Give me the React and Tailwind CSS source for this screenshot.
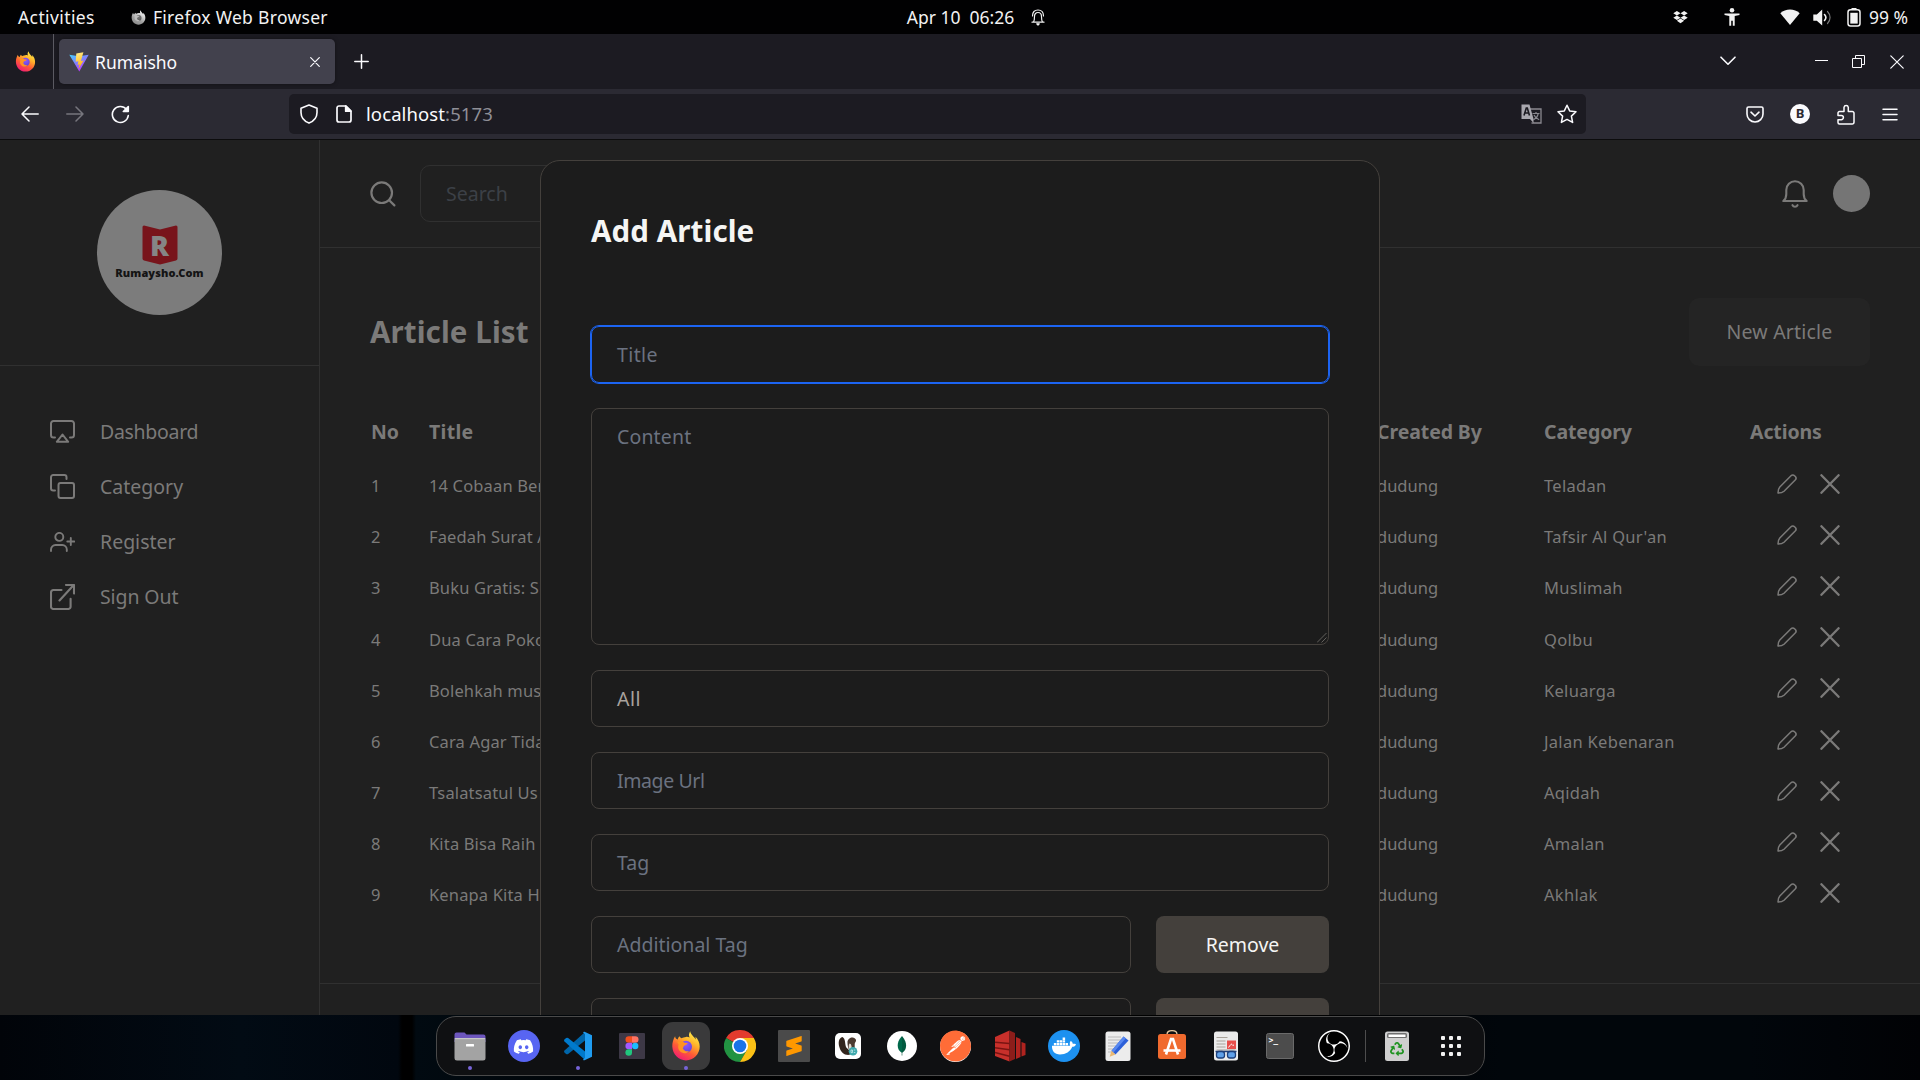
import React from "react";
import { FaDiscord, FaDocker, FaDropbox, FaRecycle } from "react-icons/fa";
import { SiSublimetext, SiObsstudio, SiPostman } from "react-icons/si";

const stroke = {
  fill: "none",
  stroke: "currentColor",
  strokeLinecap: "round",
  strokeLinejoin: "round",
};

/* ---------- shared artwork ---------- */

function FirefoxLogo({ size, mono = false, id }) {
  return (
    <svg width={size} height={size} viewBox="0 0 28 30">
      <defs>
        <linearGradient id={id + "f"} x1="0.8" y1="0" x2="0.25" y2="1">
          <stop offset="0" stopColor={mono ? "#ffffff" : "#fff44f"} />
          <stop offset="0.35" stopColor={mono ? "#d0d0d0" : "#ffb32a"} />
          <stop offset="0.65" stopColor={mono ? "#a0a0a0" : "#ff5a36"} />
          <stop offset="1" stopColor={mono ? "#8a8a8a" : "#f0157a"} />
        </linearGradient>
        <radialGradient id={id + "g"} cx="0.5" cy="0.3" r="0.8">
          <stop offset="0" stopColor={mono ? "#7a7a7a" : "#9059ff"} />
          <stop offset="1" stopColor={mono ? "#555555" : "#5b3fd0"} />
        </radialGradient>
      </defs>
      <path
        d="M18.2 0.3c-1.400 2.400-1.600 4.200-.6 6.200-1.400-.7-2.400-.7-3.600-.6-1.800.1-3 .6-4.300 1.400-.9-.2-1.700-.9-2.200-2-1 .8-1.500 2-1.700 3.200C4.200 8.200 3.300 7 3.100 5.300 1.200 8.200.2 12 .3 15.600.6 23.400 6.500 29.400 14 29.400c7.700 0 13.700-6.200 13.700-13.800 0-4-1.600-7.400-4.200-9.900.2 1.200.2 2.100.1 2.900C22.400 5.600 18.900 4.300 18.200.3Z"
        fill={`url(#${id}f)`}
      />
      <circle cx="14" cy="15.800" r="6" fill={`url(#${id}g)`} />
      <path
        d="M5.200 10.800c2.400-1.200 5.200-.9 7.200.9 1.100.2 2.400.2 3.200.4-.3 1.500-1.800 1.900-3.400 2.700-.8.500-.6 1.900-1.400 2.400 1.200 2.900 4 3.600 6.200 2.700-2 3-6.700 3.200-9.200.2-1.600-1.900-2.100-4.500-1.200-6.700Z"
        fill={mono ? "#bdbdbd" : "#ff9322"}
      />
    </svg>
  );
}

function ViteLogo() {
  return (
    <svg width="20" height="20" viewBox="0 0 20 20">
      <defs>
        <linearGradient id="viteA" x1="0" y1="0" x2="0.6" y2="1">
          <stop offset="0" stopColor="#41d1ff" />
          <stop offset="1" stopColor="#bd34fe" />
        </linearGradient>
        <linearGradient id="viteB" x1="0.4" y1="0" x2="0.6" y2="1">
          <stop offset="0" stopColor="#ffea83" />
          <stop offset="1" stopColor="#ffa800" />
        </linearGradient>
      </defs>
      <path d="M0.300 2.700 10 4.200l9.700-1.500L10.300 19.500Z" fill="url(#viteA)" />
      <path d="M14.400.2 7.300 1.600l-.6 8.200 2.700-.5-.8 3.600 2-.6-1.200 4.900 5.200-8.600-2.700.4Z" fill="url(#viteB)" />
    </svg>
  );
}

/* ---------- desktop top bar ---------- */

function TopBar() {
  return (
    <div className="grid h-[34px] shrink-0 grid-cols-3 items-center bg-[#010102] text-[17.5px] tracking-[0.3px] text-[#f2f2f2]">
      <div className="flex items-center pl-[18px]">
        <span className="tracking-[0.4px]">Activities</span>
        <span className="ml-[36px] mr-[7px] flex">
          <FirefoxLogo size={15} mono id="ffTop" />
        </span>
        <span>Firefox Web Browser</span>
      </div>
      <div className="flex items-center justify-center gap-[17px] pl-[32px]">
        <span className="whitespace-pre tracking-[0px]">Apr 10  06:26</span>
        <svg width="14" height="17" viewBox="0 0 14 17" {...stroke} strokeWidth="1.200">
          <path d="M1 13.200h12M2.500 13c1-1.500 1-3 1-5.500 0-2.500 1.500-4 3.500-4s3.500 1.500 3.500 4c0 2.500 0 4 1 5.500M1.500 7c0-4 2-6 5.500-6s5.500 2 5.500 6" />
          <path d="M5.700 14.800h2.600L7 16Z" fill="currentColor" />
        </svg>
      </div>
      <div className="flex items-center justify-end pr-[12px]">
        <FaDropbox className="mr-[36px] h-[14px] w-[15px]" />
        <svg className="mr-[40px]" width="16" height="18" viewBox="0 0 16 18" fill="currentColor">
          <circle cx="8" cy="2.300" r="2.300" />
          <path d="M.5 5.400h15v1.500L10.700 8v9.800H8.800v-5H7.200v5H5.300V8L.5 6.900Z" />
        </svg>
        <svg className="mr-[13px]" width="20" height="17" viewBox="0 0 20 17" fill="currentColor">
          <path d="M.3 4.200C5.500-.6 14.500-.6 19.700 4.200L10 16Z" />
        </svg>
        <svg className="mr-[15px]" width="19" height="17" viewBox="0 0 19 17">
          <path d="M.3 5.500h3.500L9.200.5v16L3.800 11.800H.3Z" fill="currentColor" />
          <path d="M11.500 5.500c1.600 1.800 1.600 4.300 0 6" {...stroke} strokeWidth="1.600" />
          <path d="M14.500 2.500c3.400 3.500 3.400 8.500 0 12" {...stroke} strokeWidth="1.200" opacity="0.5" />
        </svg>
        <svg className="mr-[8px]" width="14" height="19" viewBox="0 0 14 19">
          <path d="M4.500 0h5v2h-5Z" fill="currentColor" />
          <rect x="1" y="1.700" width="12" height="16.300" rx="2.500" {...stroke} strokeWidth="1.500" />
          <rect x="3.300" y="4.800" width="7.400" height="10.800" fill="currentColor" />
        </svg>
        <span className="tracking-normal">99 %</span>
      </div>
    </div>
  );
}

/* ---------- browser chrome ---------- */

function TabStrip() {
  return (
    <div className="flex h-[55px] shrink-0 items-center bg-[#1c1b22] text-[#fbfbfe]">
      <div className="flex h-full w-[54px] items-center justify-center border-r border-[#5b5a62] pr-[3px]">
        <FirefoxLogo size={21} id="ffPin" />
      </div>
      <div className="ml-[5px] flex h-[45px] w-[276px] items-center rounded-[5px] bg-[#42414d] pl-[10px] pr-[15px] shadow-[0_0_4px_rgba(0,0,0,0.4)]">
        <ViteLogo />
        <span className="ml-[6px] flex-1 pt-[1px] text-[17.5px]">Rumaisho</span>
        <svg width="10" height="10" viewBox="0 0 10 10" {...stroke} strokeWidth="1.200">
          <path d="M.7.7l8.600 8.600M9.300.7.7 9.300" />
        </svg>
      </div>
      <svg className="ml-[19px]" width="15" height="15" viewBox="0 0 15 15" {...stroke} strokeWidth="1.500">
        <path d="M7.500.8v13.400M.8 7.500h13.400" />
      </svg>
      <div className="ml-auto flex items-center pr-[16px]">
        <svg className="mr-[79px] -mt-[2px]" width="16" height="10" viewBox="0 0 16 10" {...stroke} strokeWidth="1.600">
          <path d="M1 1.200 8 8.200l7-7" />
        </svg>
        <svg className="mr-[24px]" width="13" height="14" viewBox="0 0 13 14" fill="none" stroke="currentColor">
          <path d="M0 5.500h13" />
        </svg>
        <svg className="mr-[25px]" width="13" height="13" viewBox="0 0 13 13" fill="none" stroke="currentColor">
          <path d="M.5 3.500h9v9h-9ZM3.500 3.500v-3h9v9h-3" />
        </svg>
        <svg width="14" height="14" viewBox="0 0 14 14" {...stroke} strokeWidth="1.200">
          <path d="M.8.8l12.400 12.400M13.200.8.8 13.200" />
        </svg>
      </div>
    </div>
  );
}

function NavBar() {
  return (
    <div className="flex h-[51px] shrink-0 items-center border-b border-[#0c0c0d] bg-[#2b2a33] text-[#fbfbfe]">
      <svg className="ml-[21px]" width="18" height="16" viewBox="0 0 18 16" {...stroke} strokeWidth="1.500">
        <path d="M17.200 8H1M8 1 1 8l7 7" />
      </svg>
      <svg className="ml-[27px] text-[#77767e]" width="18" height="16" viewBox="0 0 18 16" {...stroke} strokeWidth="1.500">
        <path d="M.8 8H17M10 1l7 7-7 7" />
      </svg>
      <svg className="ml-[27px]" width="19" height="19" viewBox="0 0 19 19" {...stroke} strokeWidth="1.600">
        <path d="M17.300 10.500A8 8 0 1 1 15.500 4.300" />
        <path d="M17.300 1.500v5h-5Z" fill="currentColor" />
      </svg>
      <div className="ml-[159px] flex h-10 w-[1297px] items-center rounded-[5px] bg-[#1c1b22] pl-[11px] pr-[9px]">
        <svg width="18" height="20" viewBox="0 0 18 20" {...stroke} strokeWidth="1.600">
          <path d="M9 1 17 4.200v4.300c0 4.500-2.800 8.500-8 10.600C3.800 17 1 13 1 8.500V4.200Z" />
        </svg>
        <svg className="ml-[18px]" width="16" height="18" viewBox="0 0 16 18" {...stroke} strokeWidth="1.700">
          <path d="M3 1h7l5 5v9a2 2 0 0 1-2 2H3a2 2 0 0 1-2-2V3a2 2 0 0 1 2-2Z" />
          <path d="M9.700 1v5.200h5Z" fill="currentColor" />
        </svg>
        <span className="ml-[14px] flex-1 text-[18.500px] tracking-[0.1px]">
          localhost<span className="text-[#8f8f97]">:5173</span>
        </span>
        <svg width="21" height="20" viewBox="0 0 21 20">
          <path d="M9 5h11v14H10.500" fill="none" stroke="#8a8990" strokeWidth="1.300" />
          <path d="M11.500 9.500h7M15 8v1.500M17.200 9.700c-.6 3-2.500 5-4.700 6M13 11c1 2.300 3 4 5.200 4.700" fill="none" stroke="#8a8990" strokeWidth="1.200" />
          <path d="M.5.500h8L12.500 15H.5Z" fill="#a9a8af" />
          <path d="M9 15h3.500v4Z" fill="#a9a8af" />
          <path d="M3 11.500 5.300 4h1L8.500 11.500M3.800 9h4" fill="none" stroke="#1c1b22" strokeWidth="1.600" />
        </svg>
        <svg className="ml-[15px]" width="20" height="20" viewBox="0 0 20 20" {...stroke} strokeWidth="1.500">
          <path d="m10 1.200 2.700 5.700 6.300.8-4.600 4.400 1.200 6.300L10 15.400l-5.600 3 1.200-6.300L1 7.700l6.300-.8Z" />
        </svg>
      </div>
      <div className="ml-auto flex items-center pr-[22px]">
        <svg width="18" height="17" viewBox="0 0 18 17" {...stroke} strokeWidth="1.600">
          <path d="M2.500 1h13A1.500 1.500 0 0 1 17 2.500V8A8 8 0 0 1 1 8V2.500A1.500 1.500 0 0 1 2.500 1Z" />
          <path d="m5 6.200 4 3.800 4-3.800" />
        </svg>
        <span className="ml-[26px] flex size-5 items-center justify-center rounded-full bg-[#fbfbfe] text-[13px] font-bold text-[#2b2a33]">
          B
        </span>
        <svg className="ml-[27px]" width="18" height="21" viewBox="0 0 18 21" {...stroke} strokeWidth="1.500">
          <path d="M2.500 7.500H7V3.300a2.200 2.200 0 0 1 4.300 0v4.200h4a1.700 1.700 0 0 1 1.700 1.700v9.100a1.700 1.700 0 0 1-1.700 1.700H2.500A1.500 1.500 0 0 1 1 18.500V15.700h3.300a2.100 2.100 0 0 0 0-4.200H1V9a1.500 1.500 0 0 1 1.500-1.500Z" />
        </svg>
        <svg className="ml-[27px]" width="16" height="13" viewBox="0 0 16 13" {...stroke} strokeWidth="1.500">
          <path d="M1 1.200h14M1 6.500h14M1 11.800h14" />
        </svg>
      </div>
    </div>
  );
}

/* ---------- dashboard page ---------- */

const menu = [
  {
    label: "Dashboard",
    track: "tracking-[-0.3px]",
    icon: (
      <svg width="25" height="23" viewBox="0 0 25 23" {...stroke} strokeWidth="2">
        <path d="M5 17.500H3.500A2.500 2.500 0 0 1 1 15V3.500A2.500 2.500 0 0 1 3.500 1h18A2.500 2.500 0 0 1 24 3.500V15a2.500 2.500 0 0 1-2.500 2.500H20" />
        <path d="m12.500 14.500 5.700 7.300H6.800Z" />
      </svg>
    ),
  },
  {
    label: "Category",
    track: "tracking-normal",
    icon: (
      <svg width="25" height="25" viewBox="0 0 25 25" {...stroke} strokeWidth="2">
        <path d="M5 16.500H3.200A2.200 2.200 0 0 1 1 14.300V3.200A2.200 2.200 0 0 1 3.200 1h11.100a2.200 2.200 0 0 1 2.200 2.200V5" />
        <rect x="8.500" y="9" width="15.500" height="15" rx="2" />
      </svg>
    ),
  },
  {
    label: "Register",
    track: "tracking-normal",
    icon: (
      <svg width="25" height="20" viewBox="0 0 25 20" {...stroke} strokeWidth="1.900">
        <circle cx="9.300" cy="4.900" r="4" />
        <path d="M1 19v-1.500a4.500 4.500 0 0 1 4.500-4.500h6.800a4.500 4.500 0 0 1 4.500 4.500V19M20.800 6v7M17.300 9.500h7" />
      </svg>
    ),
  },
  {
    label: "Sign Out",
    track: "tracking-[-0.1px]",
    icon: (
      <svg width="25" height="26" viewBox="0 0 25 26" {...stroke} strokeWidth="2.100">
        <path d="M11.500 6H3.300A2.300 2.300 0 0 0 1 8.300v14.400A2.300 2.300 0 0 0 3.300 25h15a2.300 2.300 0 0 0 2.300-2.300v-8" />
        <path d="M9.500 16.500 23.500 1.200M16 1h8v8.500" />
      </svg>
    ),
  },
];

function Sidebar() {
  return (
    <aside className="flex w-[320px] shrink-0 flex-col border-r border-[#303030]">
      <div className="flex h-[226px] shrink-0 items-center justify-center border-b border-[#303030]">
        <div className="flex size-[125px] flex-col items-center rounded-full bg-[#7c7c7c] pt-[35px]">
          <div className="relative">
            <svg width="36" height="40" viewBox="0 0 36 40">
              <path d="M2 0.500 18 4.500l16-4q1.500 0 1.500 1.500v31.500q0 1.500-1.500 2L18 39.500 2 35.500q-1.500-.5-1.500-2V2Q.5.500 2 .5Z" fill="#78141b" />
            </svg>
            <span className="absolute inset-0 flex items-center justify-center text-[28px] font-black leading-none text-[#858585]">
              R
            </span>
          </div>
          <span className="mt-[1px] text-[11px] font-black leading-[14px] tracking-[0.1px] text-[#141414]">
            Rumaysho.Com
          </span>
        </div>
      </div>
      <nav className="flex flex-col pt-[38px]">
        {menu.map((m) => (
          <a key={m.label} className="flex h-[55px] items-center gap-[25px] pl-[50px] text-[19.500px] text-[#7b7a79]">
            {m.icon}
            <span className={m.track}>{m.label}</span>
          </a>
        ))}
      </nav>
    </aside>
  );
}

const rows = [
  ["14 Cobaan Berat", "Teladan"],
  ["Faedah Surat Al", "Tafsir Al Qur'an"],
  ["Buku Gratis: Siap", "Muslimah"],
  ["Dua Cara Pokok", "Qolbu"],
  ["Bolehkah muslim", "Keluarga"],
  ["Cara Agar Tidak", "Jalan Kebenaran"],
  ["Tsalatsatul Us", "Aqidah"],
  ["Kita Bisa Raih", "Amalan"],
  ["Kenapa Kita H", "Akhlak"],
];

function Main() {
  return (
    <main className="flex min-w-0 flex-1 flex-col text-[#7b7a79]">
      <header className="flex h-[108px] shrink-0 items-center border-b border-[#303030] px-[50px]">
        <svg width="26" height="26" viewBox="0 0 26 26" {...stroke} strokeWidth="2.200">
          <circle cx="11.700" cy="11.700" r="10.300" />
          <path d="m19.200 19.200 5.200 5.200" />
        </svg>
        <div className="ml-[24px] flex h-[57px] w-[500px] items-center rounded-[10px] border border-[#303030] pl-[25px] text-[19.500px] text-[#3c4047]">
          Search
        </div>
        <svg className="ml-auto" width="26" height="28" viewBox="0 0 26 28" {...stroke} strokeWidth="2.100">
          <path d="M1.300 21h23.400c-1.900-1.500-3-3.500-3-7V10a8.700 8.700 0 0 0-17.400 0v4c0 3.500-1.100 5.500-3 7Z" />
          <path d="M10.500 25.200c1 2 4 2 5 0" />
        </svg>
        <span className="ml-[25px] size-[37px] rounded-full bg-[#757575]" />
      </header>

      <section className="mb-[62px] flex shrink-0 flex-col px-[50px] pt-[50px]">
        <div className="flex h-[68px] items-center justify-between">
          <h1 className="text-[29.500px] font-bold tracking-[0.1px]">Article List</h1>
          <button className="flex h-[68px] w-[181px] items-center justify-center rounded-[10px] bg-[#242424] text-[19.500px] tracking-[0.2px]">
            New Article
          </button>
        </div>
        <div className="mt-[37px] grid h-[57px] grid-cols-[58px_948px_167px_206px_1fr] items-center pl-[1px] text-[19.500px] font-bold">
          <span>No</span>
          <span className="tracking-[0.3px]">Title</span>
          <span className="tracking-[-0.1px]">Created By</span>
          <span className="tracking-[-0.1px]">Category</span>
          <span className="tracking-[-0.1px]">Actions</span>
        </div>
        {rows.map(([title, cat], i) => (
          <div
            key={title}
            className="grid h-[51.200px] grid-cols-[58px_948px_167px_206px_1fr] items-center pl-[1px] text-[16.500px]"
          >
            <span className="pt-[1.500px]">{i + 1}</span>
            <span className="pt-[1.500px] tracking-[0.15px]">{title}</span>
            <span className="pt-[1.500px]">dudung</span>
            <span className="pt-[1.500px] tracking-[0.3px]">{cat}</span>
            <span className="flex items-center gap-[23px] pb-[4px] pl-[27px]">
              <svg width="20" height="20" viewBox="0 0 20 20" {...stroke} strokeWidth="1.500">
                <path d="M1 19c0-3 .4-4.500 1.800-6L14 1.800c1-1 2.600-1 3.500-.1l.8.800c.9.900.9 2.500-.1 3.500L7 17.200C5.500 18.600 4 19 1 19Z" />
              </svg>
              <svg width="20" height="20" viewBox="0 0 20 20" {...stroke} strokeWidth="2.300">
                <path d="m1.400 1.200 17.200 17.600M18.600 1.200 1.400 18.800" />
              </svg>
            </span>
          </div>
        ))}
      </section>
      <footer className="flex-1 border-t border-[#303030]" />
    </main>
  );
}

/* ---------- modal ---------- */

const plainField = "border-[#44403c] text-[#6b7280]";

function Field({ label, className = plainField }) {
  return (
    <div className={"flex h-[57px] items-center rounded-[8px] border pl-[25px] text-[19.500px] " + className}>{label}</div>
  );
}

function RemoveButton({ label }) {
  return <button className="h-[57px] w-[173px] rounded-[8px] bg-[#44403c] text-[19.500px] text-[#f5f5f4]">{label}</button>;
}

function Modal() {
  return (
    <div className="absolute inset-0 flex justify-center overflow-hidden pt-5">
      <div className="flex h-[1100px] w-[840px] flex-col rounded-[20px] border border-[#44403c] bg-[#1c1c1c] px-[50px] pt-[51px]">
        <h2 className="h-[114px] text-[29.500px] font-bold leading-[38px] tracking-[0.1px] text-[#f5f5f4]">Add Article</h2>
        <div className="flex flex-col gap-[25px]">
          <Field label="Title" className="border-[#1c64f2] tracking-[0.4px] text-[#6b7280] ring-1 ring-[#1c64f2]" />
          <div className="relative h-[237px] rounded-[8px] border border-[#44403c] pl-[25px] pt-[14px] text-[19.500px] leading-[28px] tracking-[0.15px] text-[#6b7280]">
            Content
            <svg className="absolute bottom-[1px] right-[1px]" width="10" height="10" viewBox="0 0 10 10" stroke="#77736f" strokeWidth="0.8">
              <path d="M0 9.500 9.500 0M4.500 9.500 9.500 4.500" />
            </svg>
          </div>
          <Field label="All" className="border-[#44403c] tracking-[0.5px] text-[#a8a29e]" />
          <Field label="Image Url" className="border-[#44403c] tracking-[-0.4px] text-[#6b7280]" />
          <Field label="Tag" />
          <div className="grid grid-cols-[540px_173px] gap-[25px]">
            <Field label="Additional Tag" />
            <RemoveButton label="Remove" />
          </div>
          <div className="grid grid-cols-[540px_173px] gap-[25px]">
            <Field label="" />
            <RemoveButton label="" />
          </div>
        </div>
      </div>
    </div>
  );
}

/* ---------- dock ---------- */

const apps = [
  {
    name: "files",
    running: true,
    art: (
      <svg width="32" height="32" viewBox="0 0 32 32">
        <path d="M.5 10V4.500A2 2 0 0 1 2.500 2.500h8l2 2h17A2 2 0 0 1 31.500 6.500V12H.5Z" fill="#6d56bd" />
        <path d="M.5 10q0-2 2-2h27q2 0 2 2v18q0 2.500-2.500 2.500H3Q.5 30.500.5 28Z" fill="#a3a3a3" />
        <path d="M.7 8.700h30.600" stroke="#cfcfcf" />
        <rect x="12" y="14" width="8" height="2.400" rx=".5" fill="#fff" />
      </svg>
    ),
  },
  {
    name: "discord",
    art: (
      <span className="flex size-8 items-center justify-center rounded-full bg-[#5865f2]">
        <FaDiscord className="size-[21px] text-white" />
      </span>
    ),
  },
  {
    name: "code",
    running: true,
    art: (
      <svg width="30" height="30" viewBox="0 0 30 30">
        <path d="M22 1 1.500 19.500q-1 1 0 2l1.600 1.500q1 .7 2 0L22 9.500Z" fill="#0065a9" />
        <path d="M22 29 1.500 10.500q-1-1 0-2L3.100 7q1-.7 2 0L22 20.500Z" fill="#007acc" />
        <path d="M21.500.8 29 4.200v21.600l-7.500 3.400q-1 .3-1.500-.5l2-2V3.300l-2-2q.5-.8 1.500-.5Z" fill="#1f9cf0" />
      </svg>
    ),
  },
  {
    name: "figma",
    art: (
      <svg width="26" height="26" viewBox="0 0 26 26">
        <rect width="26" height="26" rx="1" fill="#3d3846" />
        <path d="M13 3.300H9.700a3.200 3.200 0 0 0 0 6.400H13Z" fill="#f24e1e" />
        <path d="M13 3.300h3.300a3.200 3.200 0 0 1 0 6.400H13Z" fill="#ff7262" />
        <path d="M13 9.700H9.700a3.200 3.200 0 0 0 0 6.500H13Z" fill="#a259ff" />
        <circle cx="16.200" cy="13" r="3.200" fill="#1abcfe" />
        <path d="M13 16.200H9.700A3.300 3.300 0 1 0 13 19.500Z" fill="#20c67e" />
      </svg>
    ),
  },
  { name: "firefox", running: true, active: true, art: <FirefoxLogo size={30} id="ffDock" /> },
  {
    name: "chrome",
    art: (
      <svg width="32" height="32" viewBox="0 0 32 32">
        <path d="M16 16 2.140 8A16 16 0 0 1 29.860 8Z" fill="#e33b2e" />
        <path d="M16 16 2.140 8A16 16 0 0 0 16 32L23 20Z" fill="#229342" />
        <path d="M16 8h13.860A16 16 0 0 1 16 32l6.900-12Z" fill="#fbc116" />
        <circle cx="16" cy="16" r="8" fill="#fff" />
        <circle cx="16" cy="16" r="6.300" fill="#1a73e8" />
      </svg>
    ),
  },
  {
    name: "sublime",
    art: (
      <span className="flex size-8 items-center justify-center rounded-[1px] bg-[#4a4a4a]">
        <SiSublimetext className="size-[20px] text-[#ff9800]" />
      </span>
    ),
  },
  {
    name: "dbeaver",
    art: (
      <svg width="26" height="26" viewBox="0 0 26 26">
        <rect width="26" height="26" rx="5" fill="#fff" />
        <path d="M7.500 4C3.500 5 3 10 4.500 14.500c1 3.300 3 6.500 7 7.300 3 .5 5-.8 5.500-2l-5.500-5C9.500 11.500 11 6 7.500 4Z" fill="#33251d" />
        <path d="M12.500 9c0-2 2-4.500 4.500-4.500 2 0 4.500 1.500 4 3.500-.4 1.300-1.300 1.500-1.300 3.500v7l-5-1c-2-2.500-2.200-6-2.200-8.500Z" fill="#4b3a30" />
        <path d="M14.500 10.500c1.700 0 2.400 3 2 6l-1.500 1c-1.500-2.500-1.800-5-.5-7Z" fill="#e4d9cf" />
        <circle cx="18" cy="18.300" r="4.300" fill="#3fa9ad" />
        <path d="M16 17h1.500v2.600H16ZM18.800 17h1.500M18.800 19.500h1.500" stroke="#d5f1f1" strokeWidth=".7" fill="none" />
      </svg>
    ),
  },
  {
    name: "mongodb",
    art: (
      <svg width="30" height="30" viewBox="0 0 30 30">
        <circle cx="15" cy="15" r="15" fill="#fff" />
        <path d="M15 5c-3.500 4-4.300 7-4.300 9.700 0 3 1.600 5.600 4.300 7.300Z" fill="#00684a" />
        <path d="M15 5c3.300 4 4.100 7 4.100 9.700 0 3-1.500 5.600-4.100 7.300Z" fill="#01593f" />
        <path d="M14.700 21h.6l.2 3.500h-1Z" fill="#5c8f7e" />
      </svg>
    ),
  },
  {
    name: "postman",
    art: (
      <span className="flex size-[31px] items-center justify-center rounded-full bg-white">
        <SiPostman className="size-[32px] text-[#ff6c37]" />
      </span>
    ),
  },
  {
    name: "redis",
    art: (
      <svg width="32" height="32" viewBox="0 0 32 32">
        <path d="m1 7 14.500-6.500v31L1 26Z" fill="#c8302b" />
        <path d="M15.500.5 21 3v26l-5.500 2.500Z" fill="#8c1d1a" />
        <path d="M22 7l4.500 2v18L22 29Z" fill="#b0231f" />
        <path d="m27.500 12 4 1.500v11.500l-4 1.500Z" fill="#b0231f" />
        <path d="M1 12.300l14.500 1.200M1 17.800l14.500 2M1 22.500l14.500 3.700" stroke="#7a1412" strokeWidth="1.500" />
      </svg>
    ),
  },
  {
    name: "docker",
    art: (
      <span className="flex size-8 items-center justify-center rounded-full bg-[#1d91f0]">
        <FaDocker className="size-[24px] text-white" />
      </span>
    ),
  },
  {
    name: "text editor",
    art: (
      <svg width="32" height="32" viewBox="0 0 32 32">
        <rect x="3.500" y="1.500" width="25" height="29.500" rx="2.500" fill="#ececec" />
        <path d="M6 7h13M6 10h15M6 13h11M6 16h10M6 19h8M6 22h6" stroke="#b9b9b9" strokeWidth="1.100" />
        <path d="m21.500 6.500 5 4L13.500 24.500l-4-3.700Z" fill="#2b5fd9" />
        <path d="m21.500 6.500 2.300 1.800L11.500 22.500l-2-1.700Z" fill="#5788f0" />
        <path d="m9.500 20.800 4 3.700-5.800 2.300Z" fill="#e9b872" />
      </svg>
    ),
  },
  {
    name: "software",
    art: (
      <svg width="32" height="32" viewBox="0 0 32 32">
        <path d="M11 6V4.500Q11 .7 16 .7t5 3.800V6" fill="none" stroke="#e8c9a0" strokeWidth="1.300" />
        <rect x="2" y="4" width="28" height="25" rx="2.500" fill="#f06a2e" />
        <path d="M10 24.500 15 9h2l5 15.500" fill="none" stroke="#fff" strokeWidth="2.600" />
        <path d="M7.500 20.500h17" stroke="#fff" strokeWidth="2.600" />
      </svg>
    ),
  },
  {
    name: "documents",
    art: (
      <svg width="32" height="32" viewBox="0 0 32 32">
        <rect x="4" y="1.500" width="24" height="29" rx="2.500" fill="#ebebeb" />
        <path d="M6.500 7.500h11M6.500 11h9M6.500 14h9M6.500 17h9M6.500 20h19" stroke="#a9a39b" strokeWidth="1.200" />
        <rect x="17" y="10.500" width="9" height="8.500" fill="#e8504c" />
        <path d="M18.500 17.500q3-4.500 3.500-3t2 .5" stroke="#fff" fill="none" />
        <path d="M5.500 21.500h21" stroke="#1d3f7a" strokeWidth="1.500" />
        <rect x="6.500" y="21.500" width="8" height="6.500" rx="2.500" fill="#5fa0e8" stroke="#1d3f7a" strokeWidth="1.300" />
        <rect x="17.500" y="21.500" width="8" height="6.500" rx="2.500" fill="#5fa0e8" stroke="#1d3f7a" strokeWidth="1.300" />
      </svg>
    ),
  },
  {
    name: "terminal",
    art: (
      <span className="mb-[1px] flex h-[26px] w-[28px] rounded-[2.500px] border border-[#6a6a6a] bg-[#4c4c4c] pl-[2px] pt-[2px] font-['DejaVu_Sans_Mono'] text-[8px] font-bold leading-[9px] text-white">
        &gt;_
      </span>
    ),
  },
  {
    name: "obs",
    art: (
      <span className="flex size-8 items-center justify-center rounded-full bg-black">
        <SiObsstudio className="size-8 text-white" />
      </span>
    ),
  },
];

function Dock() {
  return (
    <div className="flex h-[65px] shrink-0 justify-center bg-[linear-gradient(90deg,#010409_0px,#020b14_240px,#01070f_398px,#000_402px,#000_412px,#010a11_416px,#010203_700px,#000_1300px,#01060b_1500px,#01060b_1750px,#010205_1920px)] pt-[1px]">
      <div className="flex h-[60px] w-[1049px] items-center rounded-[20px] border border-[#4a4a4a] bg-[#0f1012] pl-[6px]">
        {apps.map((a) => (
          <div key={a.name} className="flex h-[58px] w-[54px] items-center justify-center">
            <div
              className={
                "relative flex size-12 items-center justify-center rounded-[11px] " + (a.active ? "bg-[#3a3a3b]" : "")
              }
            >
              {a.art}
              {a.running && (
                <span className="absolute bottom-0 left-1/2 size-[4px] -translate-x-1/2 rounded-full bg-[#7764d8]" />
              )}
            </div>
          </div>
        ))}
        <span className="ml-[4px] h-8 w-px bg-[#4d4d4d]" />
        <svg className="ml-[15px]" width="32" height="32" viewBox="0 0 32 32">
          <rect x="4" y="1.500" width="24" height="29.500" rx="2.500" fill="#cfcfcf" />
          <rect x="6" y="3" width="20" height="5" rx="1.500" fill="#6f6f6f" />
          <path d="M7.500 4.500h17v2.500h-17Z" fill="#fff" />
          <FaRecycle x="9" y="12" size={14} color="#1f9321" />
        </svg>
        <div className="ml-[28px] grid grid-cols-3 gap-[4px]">
          {[0, 1, 2, 3, 4, 5, 6, 7, 8].map((n) => (
            <span key={n} className="size-[4px] rounded-[1px] bg-[#f2f2f2]" />
          ))}
        </div>
      </div>
    </div>
  );
}

export default function App() {
  return (
    <div className="flex h-[1080px] w-[1920px] flex-col overflow-hidden bg-black font-['Noto_Sans','Open_Sans',sans-serif]">
      <TopBar />
      <TabStrip />
      <NavBar />
      <div className="relative flex h-[875px] shrink-0 overflow-hidden bg-[#202020]">
        <Sidebar />
        <Main />
        <Modal />
      </div>
      <Dock />
    </div>
  );
}
